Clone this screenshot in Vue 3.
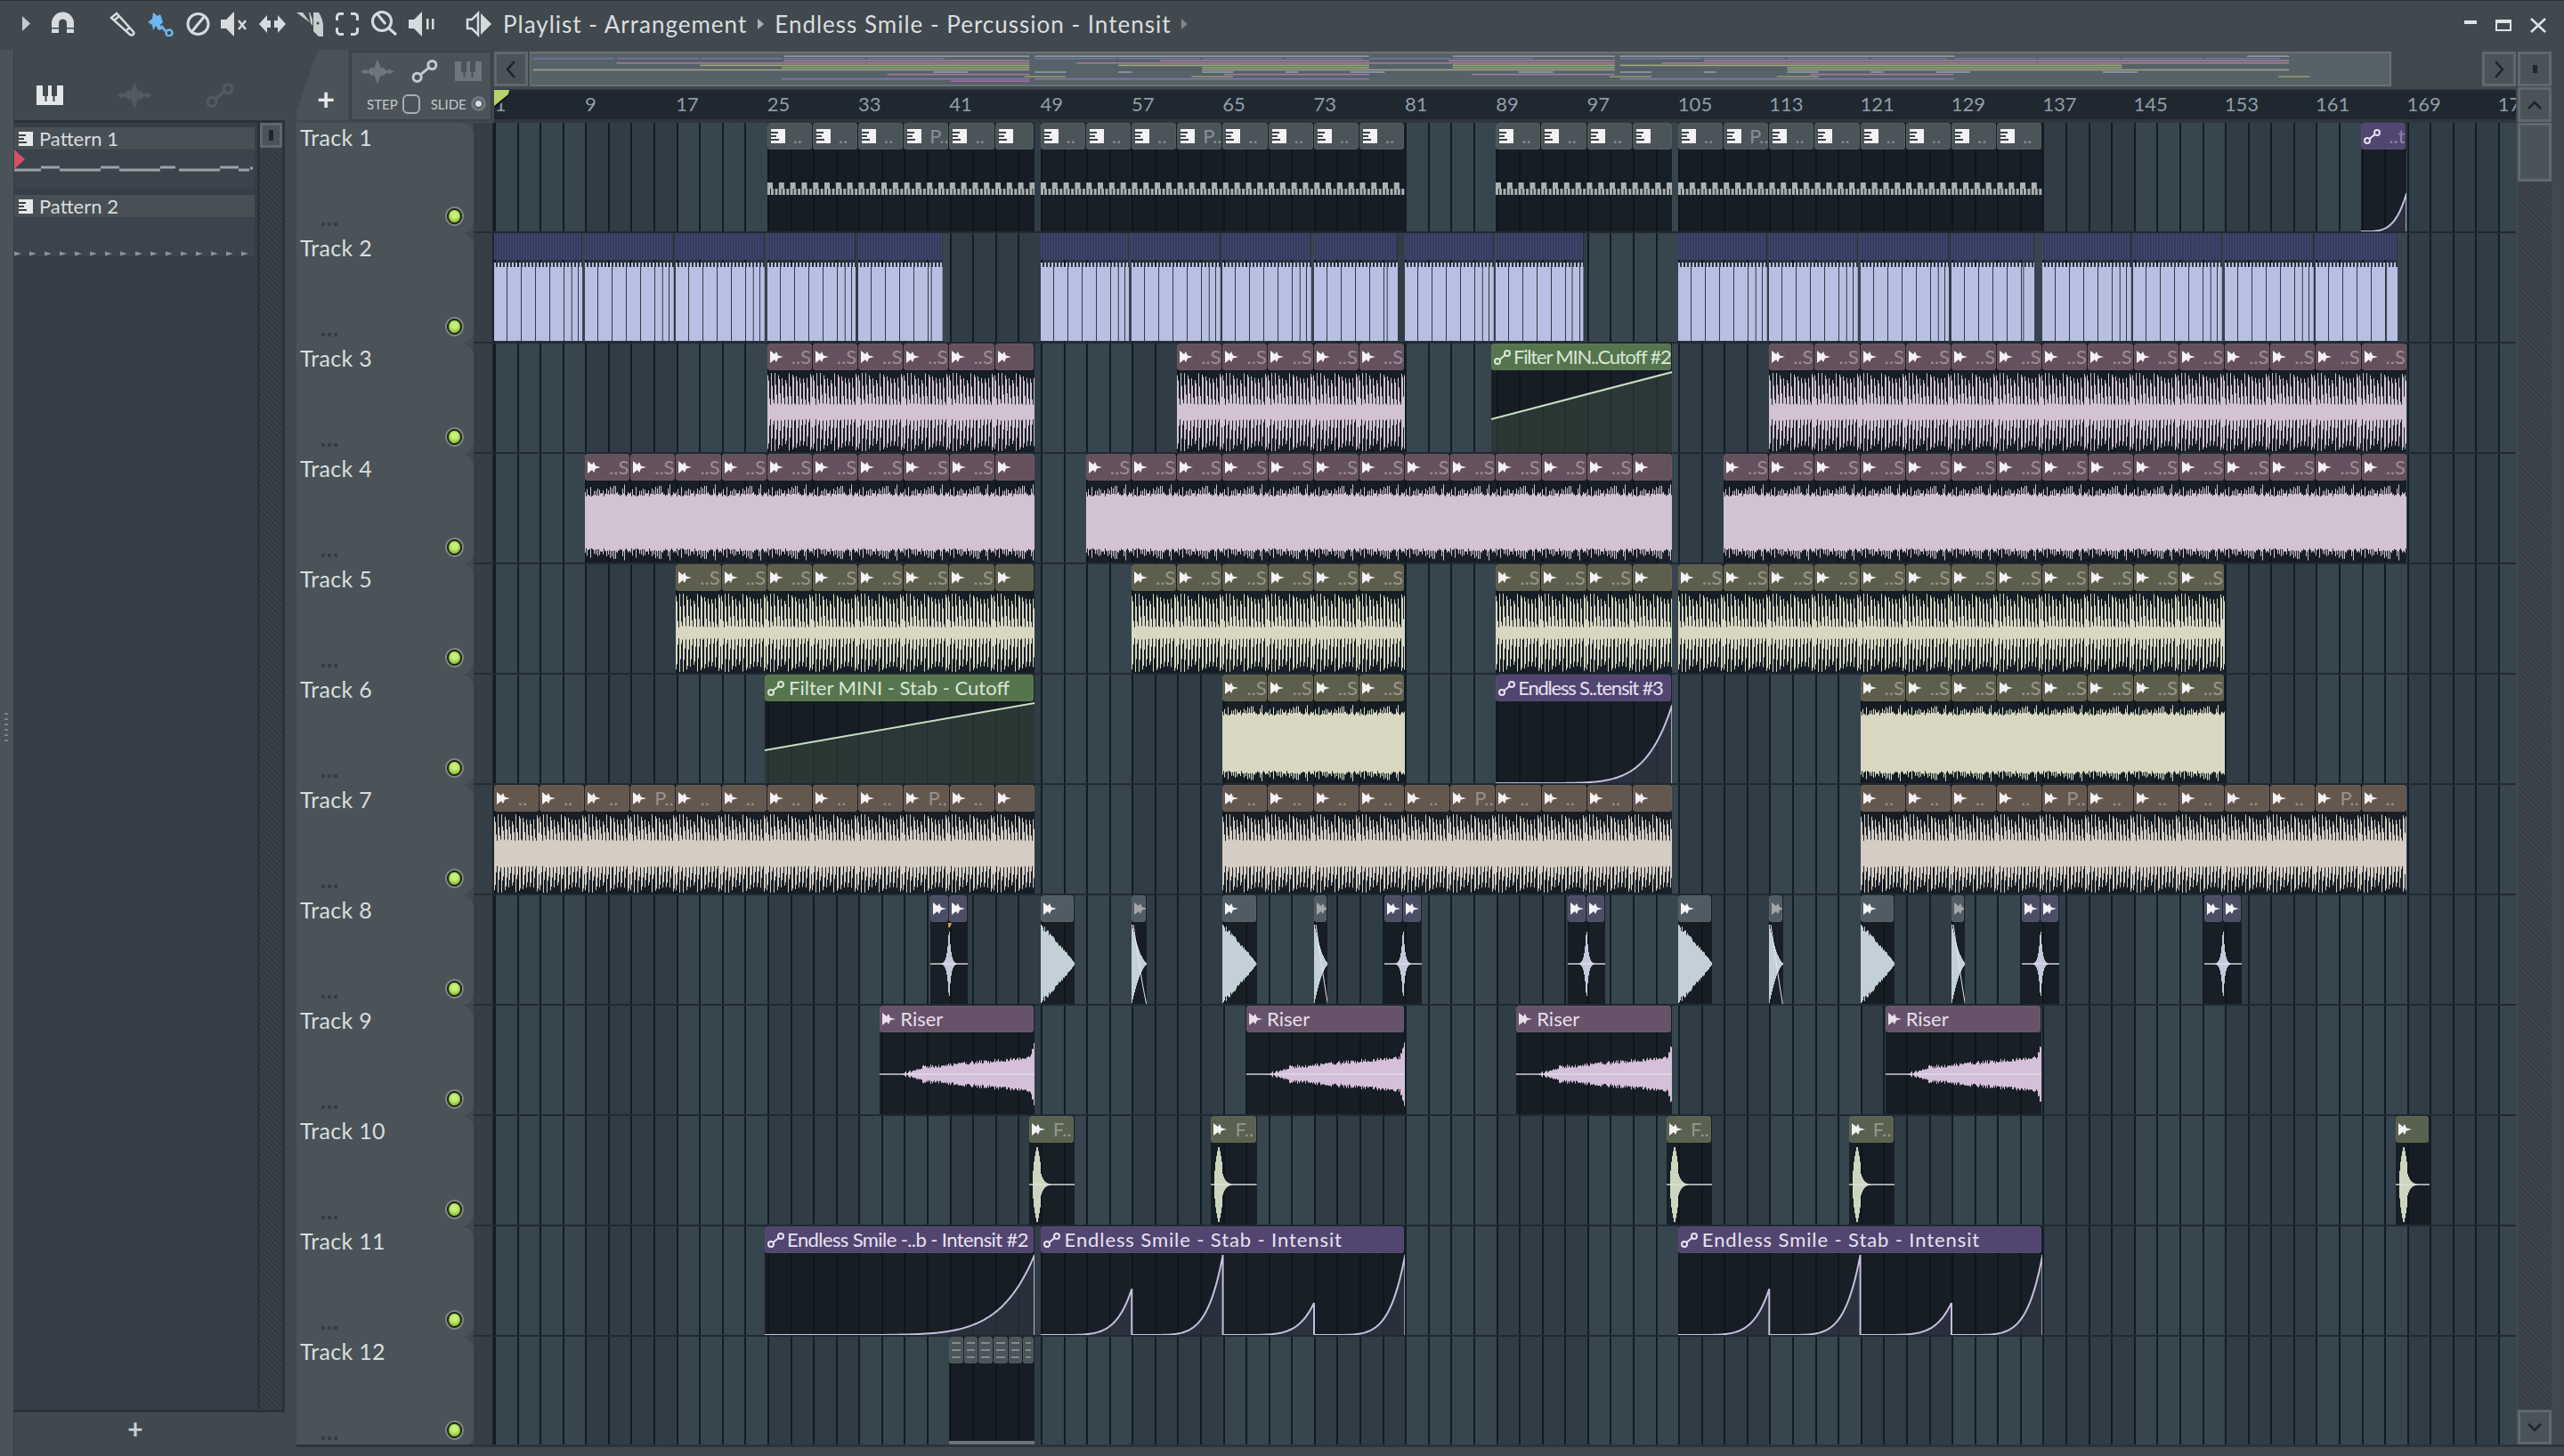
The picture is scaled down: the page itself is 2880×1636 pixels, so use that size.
<template>
  <div class="fl-window">
    <svg class="defs" width="0" height="0">
      <symbol id="ic-pat" viewBox="0 0 16 16">
        <path fill="currentColor" d="M0 0h16v16H0z" />
        <path fill="#3c4348" d="M0 3h8v2H0zM0 7h6v2H0zM0 11h9v2H0z" />
      </symbol>
      <symbol id="ic-wave" viewBox="0 0 15 14">
        <path fill="currentColor" d="M0 0l5 4 2-3 2 4.500 6 1.500-6 1.500-2 4.500-2-3-5 4z" />
      </symbol>
      <symbol id="ic-auto" viewBox="0 0 19 17">
        <g fill="none" stroke="currentColor" stroke-width="2">
          <circle cx="4" cy="13" r="3" />
          <circle cx="15" cy="4" r="3" />
          <path d="M6.500 11l6-5" />
        </g>
      </symbol>
      <symbol id="ic-piano" viewBox="0 0 30 22">
        <path fill="currentColor" fill-rule="evenodd" d="M0 0h30v22H0zM7 0v12h2.500v6h2V12H13V0zM17 0v12h1.500v6h2V12H23V0z" />
      </symbol>
      <symbol id="ic-spike" viewBox="0 0 40 30">
        <path fill="currentColor" d="M0 15l6-3 3 2 4-4 3 1 4-11 4 11 3-1 4 4 3-2 6 3-6 3-3-2-4 4-3-1-4 11-4-11-3 1-4-4-3 2z" />
      </symbol>
    </svg>

    <header class="titlebar">
      <svg class="play-btn" width="10" height="17" viewBox="0 0 10 17"><path d="M0 0l9 8.500L0 17z" /></svg>
      <svg class="magnet" width="27" height="27" viewBox="0 0 27 27">
        <path d="M1 24V13a12.500 12.500 0 0 1 25 0v11h-8V13a4.500 4.500 0 0 0-9 0v11z" />
        <path class="cut" d="M1 18h8v1.500H1zM18 18h8v1.500h-8z" />
      </svg>
      <div class="tools">
        <div class="tool">
          <svg width="30" height="28" viewBox="0 0 30 28" class="line">
            <path d="M2 7l6-5 19 21c1 3-1 4-4 3z" />
            <path d="M5 10l6-5M19 21l4-3" />
          </svg>
        </div>
        <div class="tool">
          <svg width="30" height="28" viewBox="0 0 30 28" class="blue">
            <path d="M1 12l5-4 1-7 5 4 3-2 3 9-3 3 2 5-4 1-3-5-3 5-1-6z" />
            <path d="M17 15l5 6-2 2-5-6z" />
            <circle cx="25" cy="24" r="3.500" fill="none" stroke="#6db7ee" stroke-width="2.500" />
          </svg>
        </div>
        <div class="tool">
          <svg width="27" height="26" viewBox="0 0 27 26" class="line thick">
            <circle cx="13.500" cy="13" r="11.500" />
            <path d="M7 21L20 5" />
          </svg>
        </div>
        <div class="tool">
          <svg width="32" height="30" viewBox="0 0 32 30">
            <path d="M0 10h6l9-9v28l-9-9H0z" />
            <path class="line-x" d="M20 11l8 10M28 11l-8 10" />
          </svg>
        </div>
        <div class="tool">
          <svg width="30" height="20" viewBox="0 0 30 20">
            <path d="M0 10L9 0v6h4v8H9v6zM30 10L21 0v6h-4v8h4v6z" />
            <path class="cut" d="M14 3h2v14h-2z" />
          </svg>
        </div>
        <div class="tool">
          <svg width="30" height="28" viewBox="0 0 30 28">
            <path d="M0 1h14l2 12zM19 1h6c3 5 5 10 5 15v12h-5l-6-6zM7 1l11 15V9L15 1z" opacity=".9" />
            <circle class="cut" cx="24" cy="13" r="1.500" />
          </svg>
        </div>
        <div class="tool">
          <svg width="26" height="26" viewBox="0 0 26 26" class="line thick">
            <path d="M1.500 9V5a3.500 3.500 0 0 1 3.500-3.500h4M17 1.500h4A3.500 3.500 0 0 1 24.500 5v4M24.500 17v4a3.500 3.500 0 0 1-3.500 3.500h-4M9 24.500H5A3.500 3.500 0 0 1 1.500 21v-4" />
          </svg>
        </div>
        <div class="tool">
          <svg width="30" height="29" viewBox="0 0 30 29" class="line thick">
            <circle cx="12" cy="12" r="10.500" />
            <path d="M7 4l9 11M20 20l8 7" stroke-width="3" />
          </svg>
        </div>
        <div class="tool">
          <svg width="30" height="30" viewBox="0 0 30 30">
            <path d="M0 10h6l9-9v28l-9-9H0z" />
            <path d="M20 9h2.500v12H20zM26 9h2.500v12H26z" />
          </svg>
        </div>
      </div>
      <svg class="lr-speaker" width="30" height="30" viewBox="0 0 30 30">
        <path class="hollow" d="M14 3v24l-7-7H2V10h5z" />
        <path d="M17 3l12 12-12 12z" />
      </svg>
      <span class="title-main">Playlist - Arrangement</span>
      <span class="title-sep"></span>
      <span class="title-main">Endless Smile - Percussion - Intensit</span>
      <span class="title-sep dim"></span>
      <div class="window-btns">
        <span class="win-min"></span>
        <span class="win-max"></span>
        <svg width="18" height="17" viewBox="0 0 18 17"><path d="M1 1l16 15M17 1L1 16" /></svg>
      </div>
    </header>

    <div class="workspace">
      <div class="edge-strip"><span class="grip"></span></div>

      <aside class="picker">
        <div class="picker-tools">
          <svg class="pick-ic on" width="30" height="22"><use href="#ic-piano" /></svg>
          <svg class="pick-ic off" width="40" height="30"><use href="#ic-spike" /></svg>
          <svg class="pick-ic off" width="32" height="28" viewBox="0 0 19 17"><use href="#ic-auto" width="19" height="17" /></svg>
        </div>
        <div class="picker-list">
          <div class="pattern-col">
            <div v-for="p in PATTERNS" :key="p.name" class="pattern">
              <div class="pattern-head">
                <svg class="pattern-ic" width="16" height="16"><use href="#ic-pat" /></svg>
                <span>{{ p.name }}</span>
              </div>
              <div class="pattern-body">
                <svg width="270" height="43">
                  <path v-if="p.notes" class="pat-notes" :d="p.notes" />
                  <path v-else class="pat-marks" :d="patternMarks" />
                </svg>
              </div>
            </div>
            <span class="pattern-marker"></span>
          </div>
          <div class="hatch-scroll">
            <div class="hbtn"><span class="hbtn-dot tall"></span></div>
          </div>
        </div>
        <div class="picker-add">+</div>
      </aside>

      <main class="playlist">
        <div class="playlist-top">
          <div class="tool-block">
            <div class="add-tab">+</div>
            <div class="clip-tools">
              <div class="clip-tools-icons">
                <svg class="off" width="38" height="29"><use href="#ic-spike" width="38" height="29" /></svg>
                <svg class="mid" width="32" height="26" viewBox="0 0 19 17"><use href="#ic-auto" width="19" height="17" /></svg>
                <svg class="off" width="30" height="22"><use href="#ic-piano" /></svg>
              </div>
              <div class="step-row">
                <span>STEP</span><i class="step-box"></i>
                <span class="slide">SLIDE</span><i class="slide-dot"></i>
              </div>
            </div>
          </div>

          <div class="timeline">
            <div class="overview">
              <div class="hbtn big">
                <svg width="12" height="20" viewBox="0 0 12 20"><path d="M10 1L2 10l8 9" /></svg>
              </div>
              <div class="map">
                <svg width="2091" height="37">
                  <rect
                    v-for="m in miniClips"
                    :key="m.key"
                    :class="'mini-' + m.row"
                    :x="m.x"
                    :y="m.y"
                    :width="m.w"
                    height="1.600"
                  />
                </svg>
              </div>
              <div class="overview-gap"></div>
              <div class="hbtn big">
                <svg width="12" height="20" viewBox="0 0 12 20"><path d="M2 1l8 9-8 9" /></svg>
              </div>
            </div>
            <div class="ruler">
              <span v-for="r in rulerMarks" :key="r.bar" class="ruler-num" :style="{ left: r.left + 'px' }">{{ r.bar }}</span>
              <svg class="play-mark" width="20" height="20" viewBox="0 0 20 20">
                <path class="mark-shadow" d="M0 18L17 1l1 5L2 20z" />
                <path class="mark-fill" d="M0 0h17l-1 5L0 18z" />
              </svg>
            </div>
          </div>

          <div class="vscroll-top">
            <div class="hbtn big"><span class="hbtn-dot"></span></div>
            <div class="hbtn big">
              <svg width="16" height="10" viewBox="0 0 16 10"><path d="M1 9l7-7 7 7" /></svg>
            </div>
          </div>
        </div>

        <div class="playlist-body">
          <div class="tracks">
            <div v-for="t in tracks" :key="t.name" class="track">
              <div class="track-head">
                <span class="track-name">{{ t.name }}</span>
                <span class="track-dots"><i></i><i></i><i></i></span>
                <span class="track-led"></span>
              </div>
              <div class="track-gap"></div>
              <div class="lane">
                <div
                  v-for="c in t.clips"
                  :key="c.key"
                  class="clip"
                  :class="[c.tone, c.kind]"
                  :style="{ left: c.left + 'px', width: c.width + 'px' }"
                >
                  <div class="tabs">
                    <div
                      v-for="tab in c.tabs"
                      :key="tab.key"
                      class="tab"
                      :style="{ width: tab.width + 'px' }"
                    >
                      <svg v-if="c.icon" class="tab-ic" :class="'tab-ic-' + c.icon" :width="c.icon === 'auto' ? 19 : 15" :height="c.icon === 'auto' ? 17 : 14">
                        <use :href="'#ic-' + c.icon" />
                      </svg>
                      <span v-if="tab.text" class="tab-text" :class="[c.fit, { dim: tab.dim }]">{{ tab.text }}</span>
                    </div>
                  </div>
                  <svg class="clip-art" :width="c.width" height="94">
                    <path v-for="(a, i) in c.art" :key="i" :class="a.cls" :d="a.d" />
                  </svg>
                </div>
              </div>
            </div>
          </div>
          <div class="vscroll">
            <div class="thumb"></div>
            <div class="hatch"></div>
            <div class="hbtn big">
              <svg width="16" height="10" viewBox="0 0 16 10"><path d="M1 1l7 7 7-7" /></svg>
            </div>
          </div>
        </div>
        <div class="playlist-foot"></div>
      </main>
    </div>
  </div>
</template>

<script setup>
const LANE_LEFT = 555
const BAR = 12.79
const barX = (b) => 555.7 + (b - 1) * BAR

// pseudo random, repeats per tab so waveforms look looped like the real thing
function hash(n) {
  const s = Math.sin(n * 127.1 + 11.7) * 43758.5453
  return s - Math.floor(s)
}

const MID = 47

function stabWave(w, band, max, pitch) {
  let d = ''
  for (let x = 0; x < w; x++) {
    const m = x % 51
    const r = hash(m)
    const step = m % pitch
    let amp = band + r * 2
    if (step === 0) amp = (0.8 + 0.2 * r) * max
    else if (step === 1) amp = (0.6 + 0.3 * r) * max
    else if (step === 2) amp = band + r * (max * 0.3)
    d += `M${x + 0.5} ${(MID - amp).toFixed(1)}V${(MID + amp).toFixed(1)}`
  }
  return [{ cls: 'w-stroke', d }]
}

function denseWave(w, base, max) {
  let d = ''
  for (let x = 0; x < w; x++) {
    const m = x % 51
    const r = hash(m + 60)
    const amp = m % 2 === 0 ? base + r * (max - base) : base + r * 4
    d += `M${x + 0.5} ${(MID - amp).toFixed(1)}V${(MID + amp).toFixed(1)}`
  }
  return [{ cls: 'w-stroke', d }]
}

function shapeWave(w, ampAt, withLine) {
  let d = ''
  for (let x = 0; x < w; x++) {
    const amp = Math.max(ampAt(x), 0.4)
    d += `M${x + 0.5} ${(MID - amp).toFixed(1)}V${(MID + amp).toFixed(1)}`
  }
  const art = [{ cls: 'w-stroke', d }]
  if (withLine) art.push({ cls: 'w-hair', d: `M0 ${MID}H${w}` })
  return art
}

const spikeWave = (w) =>
  shapeWave(w, (x) => 44 * Math.exp(-Math.abs(x + 0.5 - w / 2) / 2), true)

// only the first hit carries the little orange fade handle
const spikeWaveMarked = (w) => {
  const art = spikeWave(w)
  art.push({ cls: 'w-tick', d: `M${w / 2 - 1} 1h4l-2 5h-2z` })
  return art
}

const triWave = (w) =>
  shapeWave(w, (x) => 44 * Math.pow(1 - x / w, 0.9) * (0.9 + 0.16 * hash(x)) - 0.4, false)

const slimWave = (w) => {
  const art = shapeWave(w, (x) => 44 * Math.pow(1 - x / w, 1.6) + (x > w - 6 ? 1 : 0), false)
  art.push({ cls: 'w-hair', d: `M2 3C6 30 10 60 ${w} 92` })
  return art
}

const kickWave = (w) =>
  shapeWave(w, (x) => {
    if (x < 4) return 0
    if (x < 13) return 44 * Math.pow(Math.max(0, 1 - Math.abs(x - 8.5) / 5), 0.45)
    return 12 * Math.exp(-(x - 13) / 3.5)
  }, true)

function riserWave(w) {
  const art = shapeWave(w, (x) => {
    if (x < 26) return 0
    const t = (x - 26) / (w - 26)
    const jag = (hash(x) - 0.5) * 4.5
    const ramp = Math.min(1, t * 7) * 6 + 13 * t + jag
    const tip = x > w - 6 ? (x - w + 6) * 2.8 : 0
    return ramp + tip
  }, true)
  return art
}

function noteGrid(w) {
  let d = ''
  for (let x = 0; x < w; x += 12.8) {
    d += `M${x} 37h6v7h-6z`
    d += `M${x} 44h3v7h-3zM${(x + 4).toFixed(1)} 44h3v7h-3zM${(x + 8.5).toFixed(1)} 44h3v7h-3z`
  }
  return [{ cls: 'w-notes', d }]
}

function blueBody(w) {
  let solid = `M0 8H${w}V91H0z`
  for (let x = 0; x < w; x += 4) solid += `M${x} 3h2v6h-2z`
  let lines = ''
  for (let x = 14.5; x < w - 2; x += 16) lines += `M${x} 3V91`
  lines += `M${w - 12.5} 3V91`
  return [
    { cls: 'w-blue', d: solid },
    { cls: 'w-blue-lines', d: lines },
  ]
}

// exponential automation ramps, base line sits at the bottom of the clip
function curveArt(w, ramps) {
  const BASE = 92
  let line = ''
  let fill = ''
  for (const r of ramps) {
    const x0 = (r.from) * BAR
    const x1 = (r.to) * BAR
    let seg = ''
    for (let x = x0; x <= x1; x += 2) {
      const t = (x - x0) / (x1 - x0)
      const y = BASE - r.peak * Math.pow(t, r.exp || 7)
      seg += `${seg ? 'L' : 'M'}${x.toFixed(1)} ${y.toFixed(1)}`
    }
    const top = BASE - r.peak
    seg += `L${x1.toFixed(1)} ${top}`
    line += seg + `M${x1.toFixed(1)} ${top}V${BASE}`
    fill += seg + `L${x1.toFixed(1)} 94L${x0.toFixed(1)} 94z`
  }
  return [
    { cls: 'w-area', d: fill },
    { cls: 'w-curve', d: line },
  ]
}

function lineArt(w) {
  return [
    { cls: 'w-area', d: `M0 55L${w} 2V94H0z` },
    { cls: 'w-curve', d: `M0 55L${w} 2` },
  ]
}

function makeTabs(from, to, step, text, pAt) {
  const tabs = []
  let b = from
  let i = 0
  while (b < to - 0.01) {
    const end = Math.min(b + step, to)
    const width = Math.round((end - b) * BAR * 10) / 10 - 1
    const isP = pAt && pAt.includes(b)
    tabs.push({
      key: i++,
      width,
      text: width > 46 ? (isP ? 'P..' : text) : '',
      dim: true,
    })
    b = end
  }
  return tabs
}

function clip(from, to, opts) {
  const width = (to - from) * BAR
  const tabs = opts.step
    ? makeTabs(from, to, opts.step, opts.text, opts.pAt)
    : [{ key: 0, width: width - 1, text: opts.text, dim: opts.dim }]
  return {
    key: from + '-' + to,
    from,
    to,
    left: barX(from) - 1 - LANE_LEFT,
    width,
    tabs,
    tone: opts.tone,
    kind: opts.kind || '',
    fit: opts.fit || '',
    icon: opts.icon === undefined ? 'wave' : opts.icon,
    art: opts.art ? opts.art(width) : [],
  }
}

const pat = (a, b, pAt) =>
  clip(a, b, { tone: 'tone-grey', icon: 'pat', step: 4, text: '..', pAt, art: noteGrid })

function blues(a, b) {
  const out = []
  for (let s = a; s < b; s += 8) {
    const e = Math.min(s + 8, b)
    out.push(
      clip(s, e - 0.2, {
        tone: 'tone-blue',
        kind: 'flat',
        icon: null,
        art: blueBody,
      })
    )
  }
  return out
}

const stab = (a, b, tone, text, band, pAt) =>
  clip(a, b, { tone, step: 4, text, pAt, art: (w) => stabWave(w, band, 44, 4) })

const dense = (a, b, tone, base) =>
  clip(a, b, { tone, step: 4, text: '..S', art: (w) => denseWave(w, base, 44) })

const filterClip = (a, b, text, fit) =>
  clip(a, b, { tone: 'tone-green', icon: 'auto', text, fit, art: lineArt })

const curve = (a, b, text, ramps, dim, fit) =>
  clip(a, b, {
    tone: 'tone-purple',
    icon: 'auto',
    text,
    dim,
    fit,
    art: (w) => curveArt(w, ramps),
  })

const spike = (a, b, art = spikeWave) => clip(a, b, { tone: 'tone-indigo', step: (b - a) / 2, art })
const tri = (a, b) => clip(a, b, { tone: 'tone-slate', art: triWave })
const slim = (a, b) => clip(a, b, { tone: 'tone-slate', kind: 'faint', art: slimWave })
const riser = (a, b) => clip(a, b, { tone: 'tone-riser', text: 'Riser', art: riserWave })
const kick = (a, b, text = 'F..') =>
  clip(a, b, { tone: 'tone-moss', text, dim: true, art: kickWave })

const STAB_RAMPS = [
  { from: 0, to: 8, peak: 52, exp: 6 },
  { from: 8, to: 16, peak: 90, exp: 6 },
  { from: 16, to: 24, peak: 36, exp: 6 },
  { from: 24, to: 32, peak: 90, exp: 6 },
]

const tracks = [
  [
    pat(25, 48.5, [37]),
    pat(49, 81, [61]),
    pat(89, 104.5),
    pat(105, 137, [109]),
    curve(165, 169, '..t', [{ from: 0, to: 4, peak: 43, exp: 4 }], true),
  ],
  [...blues(1, 40.6), ...blues(49, 65), ...blues(65, 80.6), ...blues(81, 96.9), ...blues(105, 121), ...blues(121, 136.5), ...blues(137, 168.4)],
  [
    stab(25, 48.5, 'tone-pink', '..S', 8),
    stab(61, 81, 'tone-pink', '..S', 8),
    filterClip(88.6, 104.5, 'Filter MIN..Cutoff #2', 'fit-tight'),
    stab(113, 169, 'tone-pink', '..S', 8),
  ],
  [dense(9, 48.5, 'tone-pink', 29), dense(53, 104.5, 'tone-pink', 29), dense(109, 169, 'tone-pink', 29)],
  [
    stab(17, 48.5, 'tone-olive', '..S', 6),
    stab(57, 81, 'tone-olive', '..S', 6),
    stab(89, 104.5, 'tone-olive', '..S', 6),
    stab(105, 153, 'tone-olive', '..S', 6),
  ],
  [
    filterClip(24.8, 48.5, 'Filter MINI - Stab - Cutoff'),
    dense(65, 81, 'tone-olive', 31),
    curve(89, 104.5, 'Endless S..tensit #3', [{ from: 0, to: 15.5, peak: 88, exp: 7 }], false, 'fit-tight'),
    dense(121, 153, 'tone-olive', 31),
  ],
  [
    stab(1, 48.5, 'tone-brown', '..', 14, [13, 37]),
    stab(65, 104.5, 'tone-brown', '..', 14, [85]),
    stab(121, 169, 'tone-brown', '..', 14, [137, 161]),
  ],
  [
    spike(39.3, 42.6, spikeWaveMarked),
    tri(49, 52),
    slim(57, 58.3),
    tri(65, 68),
    slim(73, 74.2),
    spike(79.2, 82.5),
    spike(95.3, 98.6),
    tri(105, 108),
    slim(113, 114.2),
    tri(121, 124),
    slim(129, 130.2),
    spike(135.2, 138.5),
    spike(151.2, 154.5),
  ],
  [riser(34.9, 48.5), riser(67.1, 81), riser(90.8, 104.5), riser(123.2, 136.9)],
  [kick(48, 52), kick(64, 68), kick(104, 108), kick(120, 124), kick(168, 171, '')],
  [
    curve(24.8, 48.5, 'Endless Smile -..b - Intensit #2', [{ from: 0, to: 23.7, peak: 90, exp: 8 }], false, 'fit-snug'),
    curve(49, 81, 'Endless Smile - Stab - Intensit', STAB_RAMPS, false, 'fit-wide'),
    curve(105, 137, 'Endless Smile - Stab - Intensit', STAB_RAMPS, false, 'fit-wide'),
  ],
  [clip(41, 48.5, { tone: 'tone-grey', kind: 'tiny', icon: null, step: 1.3, text: '', art: (w) => [{ cls: 'w-foot', d: `M0 87h${w}v4H0z` }] })],
].map((clips, i) => ({ name: `Track ${i + 1}`, clips }))

const rulerMarks = []
for (let b = 1; b < 180; b += 8) rulerMarks.push({ bar: b, left: barX(b) - LANE_LEFT - (b === 1 ? 0 : 1) })

const miniClips = tracks.flatMap((t, row) =>
  t.clips.map((c) => ({
    key: row + '-' + c.key,
    row,
    x: 2.7 + (c.from - 1) * 11.74,
    y: 2.4 + row * 2.55,
    w: (c.to - c.from) * 11.74,
  }))
)

const PATTERNS = [
  {
    name: 'Pattern 1',
    notes: 'M0 20.500h30v3H0zM30 17.500h21v3H30zM51 20.500h46v3H51zM97 17.500h21v3H97zM118 20.500h46v3h-46zM164 17.500h17v3h-17zM185 20.500h46v3h-46zM231 17.500h21v3h-21zM252 20.500h12v3h-12zM265 18.500h3v3h-3z',
  },
  { name: 'Pattern 2', notes: '' },
]

let patternMarks = ''
for (let x = 0; x < 260; x += 17) patternMarks += `M${x} 37.500l8 2.500-8 2.500z`
</script>

<style scoped>
.fl-window {
  width: 2880px;
  height: 1636px;
  display: flex;
  flex-direction: column;
  background: #41494e;
  font-family: Lato, "Open Sans", sans-serif;
  color: #d9dedf;
  overflow: hidden;
  border-top: 1px solid #2d3539;
  box-sizing: border-box;
}

.defs {
  position: absolute;
}

/* title bar */
.titlebar {
  height: 55px;
  flex-shrink: 0;
  display: flex;
  align-items: center;
  padding-bottom: 4px;
  box-sizing: border-box;
  fill: #d7dbdd;
}

.play-btn {
  margin-left: 25px;
  fill: #c4c9cc;
}

.magnet {
  margin-left: 22px;
}

.cut {
  fill: #41494e;
}

.tools {
  display: flex;
  margin-left: 33px;
}

.tool {
  width: 42px;
  display: flex;
  justify-content: center;
  align-items: center;
}

.line,
.line path,
.line circle {
  fill: none;
  stroke: #d7dbdd;
  stroke-width: 2.5;
}

.thick,
.thick path,
.thick circle {
  stroke-width: 3;
}

.blue {
  fill: #6db7ee;
}

.line-x {
  fill: none;
  stroke: #d7dbdd;
  stroke-width: 2.5;
}

.lr-speaker {
  margin-left: 28px;
}

.hollow {
  fill: none;
  stroke: #d7dbdd;
  stroke-width: 2.5;
}

.title-main {
  font-size: 26px;
  letter-spacing: 1px;
  margin-left: 12px;
  white-space: nowrap;
}

.title-main + .title-sep {
  margin-left: 12px;
}

.title-sep {
  width: 0;
  height: 0;
  margin-right: 0;
  border-left: 7px solid #aab1b4;
  border-top: 6px solid transparent;
  border-bottom: 6px solid transparent;
}

.title-sep.dim {
  border-left-color: #7c868a;
}

.window-btns {
  margin-left: auto;
  margin-right: 20px;
  margin-top: 4px;
  display: flex;
  align-items: center;
  gap: 21px;
}

.win-min {
  width: 14px;
  height: 4px;
  margin-bottom: 8px;
  background: #dfe3e5;
}

.win-max {
  width: 18px;
  height: 13px;
  box-sizing: border-box;
  border: 2px solid #dfe3e5;
  border-top-width: 4px;
}

.window-btns svg {
  fill: none;
  stroke: #dfe3e5;
  stroke-width: 2.5;
}

/* layout */
.workspace {
  flex: 1;
  display: flex;
  min-height: 0;
}

.edge-strip {
  width: 15px;
  flex-shrink: 0;
  background: #4a5358;
  border-right: 1px solid #373f44;
  position: relative;
}

.grip {
  position: absolute;
  left: 5px;
  top: 745px;
  width: 4px;
  height: 34px;
  background: repeating-linear-gradient(180deg, #7a8388 0 2px, transparent 2px 6px);
}

/* picker */
.picker {
  width: 304px;
  flex-shrink: 0;
  display: flex;
  flex-direction: column;
}

.picker-tools {
  height: 79px;
  flex-shrink: 0;
  display: flex;
  align-items: center;
  padding-top: 22px;
  box-sizing: border-box;
  padding-left: 25px;
  gap: 60px;
}

.pick-ic.on {
  color: #e4e7e8;
}

.pick-ic.off {
  color: #525b60;
}

.picker-list {
  flex: 1;
  display: flex;
  min-height: 0;
  background: #353d46;
  border-top: 3px solid #2b3238;
  border-bottom: 3px solid #2b3238;
  border-right: 3px solid #2b3238;
}

.pattern-col {
  width: 273px;
  position: relative;
  padding-top: 5px;
}

.pattern {
  height: 76px;
  width: 270px;
  display: flex;
  flex-direction: column;
}

.pattern-head {
  height: 25px;
  flex-shrink: 0;
  display: flex;
  align-items: center;
  gap: 7px;
  background: #484f55;
  padding-left: 5px;
  border-bottom: 1px solid #3a4248;
  font-size: 22px;
  color: #d8dcde;
}

.pattern-ic {
  color: #e6e9ea;
}

.pattern-body {
  height: 43px;
  background: #3b434c;
}

.pat-notes {
  fill: #9ca2a6;
}

.pat-marks {
  fill: #8c9296;
}

.pattern-marker {
  position: absolute;
  left: 0;
  top: 30px;
  border-left: 12px solid #d6506a;
  border-top: 11px solid transparent;
  border-bottom: 11px solid transparent;
}

.hatch-scroll {
  flex: 1;
  background: repeating-linear-gradient(45deg, #3b4247 0 2px, #33393e 2px 4px);
  border-left: 3px solid #2b3238;
}

.hbtn {
  height: 28px;
  background: #4a5358;
  border: 3px solid #5f686b;
  box-sizing: border-box;
  display: flex;
  align-items: center;
  justify-content: center;
}

.hbtn svg {
  fill: none;
  stroke: #1d2429;
  stroke-width: 2.5;
}

.hbtn.big {
  width: 38px;
  height: 39px;
  flex-shrink: 0;
}

.hbtn-dot {
  width: 5px;
  height: 9px;
  background: #20272c;
}

.hbtn-dot.tall {
  height: 12px;
}

.picker-add {
  height: 49px;
  flex-shrink: 0;
  display: flex;
  align-items: center;
  justify-content: center;
  padding-right: 32px;
  padding-bottom: 14px;
  box-sizing: border-box;
  font-size: 30px;
  font-weight: 700;
  color: #c8cdcf;
}

/* playlist */
.playlist {
  flex: 1;
  margin-left: 13px;
  display: flex;
  flex-direction: column;
  min-width: 0;
}

.playlist-top {
  height: 82px;
  flex-shrink: 0;
  display: flex;
}

.tool-block {
  width: 222px;
  flex-shrink: 0;
  display: flex;
  gap: 2px;
  padding-right: 2px;
  box-sizing: border-box;
}

.add-tab {
  width: 58px;
  height: 79px;
  flex-shrink: 0;
  background: #4b5358;
  clip-path: polygon(24px 0, 100% 0, 100% 100%, 0 100%, 0 70px);
  display: flex;
  align-items: flex-end;
  justify-content: center;
  padding-left: 8px;
  padding-bottom: 7px;
  box-sizing: border-box;
  font-size: 34px;
  font-weight: 700;
  line-height: 1;
  color: #e8ebec;
}

.clip-tools {
  flex: 1;
  height: 79px;
  margin-top: 1px;
  background: #4b5358;
  display: flex;
  flex-direction: column;
  box-sizing: border-box;
  border: 2px solid #3a4247;
}

.clip-tools-icons {
  height: 42px;
  display: flex;
  align-items: center;
  justify-content: space-between;
  padding: 0 10px 0 10px;
  color: #6e767b;
}

.clip-tools-icons .off {
  color: #6e767b;
}

.clip-tools-icons .mid {
  color: #c4c9cc;
}

.step-row {
  flex: 1;
  display: flex;
  align-items: center;
  padding-left: 17px;
  padding-bottom: 2px;
  font-size: 15px;
  color: #c3c8cb;
}

.step-box {
  width: 20px;
  height: 22px;
  margin-left: 5px;
  box-sizing: border-box;
  border: 2px solid #a7adb0;
  border-radius: 6px;
}

.slide {
  margin-left: 12px;
}

.slide-dot {
  width: 17px;
  height: 17px;
  margin-left: 5px;
  box-sizing: border-box;
  border-radius: 50%;
  border: 3px solid #6d757a;
  background: #d7dbdd;
  box-shadow: inset 0 0 0 2px #4b5358;
}

.timeline {
  width: 2271px;
  flex-shrink: 0;
  display: flex;
  flex-direction: column;
  padding-top: 2px;
  box-sizing: border-box;
}

.overview {
  height: 39px;
  flex-shrink: 0;
  display: flex;
}

.map {
  margin-left: 2px;
  width: 2091px;
  flex-shrink: 0;
  height: 39px;
  box-sizing: border-box;
  background: #566168;
  border: 2px solid #697376;
  border-left-width: 1px;
  overflow: hidden;
}

.map svg {
  display: block;
}

.overview-gap {
  width: 102px;
  flex-shrink: 0;
}

.ruler {
  margin-top: 3px;
  height: 38px;
  flex-shrink: 0;
  background: #1f2830;
  border-bottom: 4px solid #2d363d;
  box-sizing: border-box;
  position: relative;
  overflow: hidden;
  box-shadow: inset 0 2px 0 #2a333a;
}

.ruler-num {
  position: absolute;
  top: 4px;
  font-size: 22px;
  line-height: 26px;
  color: #909ca8;
}

.play-mark {
  position: absolute;
  left: 0;
  top: 1px;
}

.mark-shadow {
  fill: #11181d;
}

.mark-fill {
  fill: #b6d46a;
}

.vscroll-top {
  margin-left: 2px;
  width: 38px;
  padding-top: 2px;
  display: flex;
  flex-direction: column;
  gap: 1px;
}

.playlist-body {
  height: 1485px;
  flex-shrink: 0;
  display: flex;
}

.tracks {
  width: 2493px;
  flex-shrink: 0;
  height: 100%;
  overflow: hidden;
}

.track {
  height: 124px;
  display: flex;
}

.track-head {
  width: 199px;
  flex-shrink: 0;
  box-sizing: border-box;
  position: relative;
  background: #4b5358;
  border-radius: 0 14px 14px 0;
  padding: 1px 0 0 4px;
  font-size: 25px;
  letter-spacing: 0.3px;
  line-height: 30px;
  color: #d9dedf;
}

.track-name {
  white-space: nowrap;
}

.track-dots {
  position: absolute;
  left: 28px;
  top: 112px;
  display: flex;
  gap: 3px;
}

.track-dots i {
  width: 4px;
  height: 4px;
  background: #363d42;
}

.track-led {
  position: absolute;
  left: 169px;
  top: 96px;
  width: 17px;
  height: 18px;
  box-sizing: border-box;
  border-radius: 50%;
  background: radial-gradient(circle at 50% 40%, #c8ef7a 0 30%, #94c23a 70%);
  border: 2px solid #1f2a12;
  box-shadow: 0 0 0 2px #7e868a;
}

.track-gap {
  width: 23px;
  flex-shrink: 0;
  background: #353e45;
  border-bottom: 2px solid #242d34;
  border-right: 2px solid #1a242b;
  box-sizing: border-box;
}

.lane {
  flex: 1;
  position: relative;
  background:
    repeating-linear-gradient(90deg, #121c24 0 2px, transparent 2px 25.58px),
    repeating-linear-gradient(90deg, #37454f 0 102.32px, #303d47 102.32px 204.64px);
  border-bottom: 2px solid #1f2a32;
  box-sizing: border-box;
  overflow: hidden;
}

/* clips */
.clip {
  position: absolute;
  top: 0;
  height: 122px;
  background: rgba(14, 20, 25, 0.76);
}

.clip.flat {
  background: rgba(14, 20, 25, 0.3);
}

.tabs {
  display: flex;
  height: 30px;
  gap: 1px;
}

.tab {
  height: 30px;
  flex-shrink: 0;
  box-sizing: border-box;
  display: flex;
  align-items: center;
  padding-left: 3px;
  border-radius: 3px;
  overflow: hidden;
  white-space: nowrap;
  font-size: 22px;
  color: #f4f2f4;
  box-shadow: inset 0 0 0 1px rgba(255, 255, 255, 0.04);
}

.tab-ic {
  flex-shrink: 0;
}

.tab-ic-pat {
  width: 16px;
  height: 16px;
  margin-left: 1px;
}

.tab-text {
  margin-left: 5px;
  line-height: 30px;
}

.tab-text.dim {
  margin-left: 9px;
  color: rgba(255, 255, 255, 0.36);
}

.fit-tight {
  letter-spacing: -1.2px;
  margin-left: 3px;
}

.fit-snug {
  letter-spacing: -0.6px;
  margin-left: 3px;
}

.fit-wide {
  letter-spacing: 0.9px;
}

.clip-art {
  position: absolute;
  left: 0;
  top: 30px;
}

.w-stroke {
  fill: none;
  stroke-width: 1;
}

.w-hair {
  fill: none;
  stroke: #e8e8ec;
  stroke-width: 1;
}

.w-tick {
  fill: #e0a050;
}

.w-notes {
  fill: #a9b0ae;
}

.w-foot {
  fill: #6c7478;
}

.w-blue {
  fill: #b9bfe2;
}

.w-blue-lines {
  fill: none;
  stroke: #2e3c47;
  stroke-width: 1;
}

.w-curve {
  fill: none;
  stroke-width: 2;
}

.tone-grey .tab {
  background: #4b5459;
}

.tone-blue .tab {
  background: repeating-linear-gradient(90deg, #414870 0 1px, #363c5e 1px 3px);
  border-radius: 0;
  box-shadow: none;
}

.tone-pink .tab {
  background: #64515d;
}

.tone-pink .w-stroke {
  stroke: #d2c2d2;
}

.tone-olive .tab {
  background: #5e5e4c;
}

.tone-olive .w-stroke {
  stroke: #d8d8c2;
}

.tone-brown .tab {
  background: #64574e;
}

.tone-brown .w-stroke {
  stroke: #d5cdc4;
}

.tone-green .tab {
  background: #56754f;
  color: #d8e6d4;
}

.tone-green .w-curve {
  stroke: #c6e0c2;
}

.tone-green .w-area {
  fill: rgba(126, 160, 126, 0.2);
}

.tone-purple .tab {
  background: #52456f;
  color: #e6e1f4;
}

.tone-purple .w-curve {
  stroke: #c6c0de;
}

.tone-purple .w-area {
  fill: rgba(170, 160, 215, 0.14);
}

.tone-indigo .tab {
  background: #4b4e65;
}

.tone-indigo .w-stroke {
  stroke: #c6c9dc;
}

.tone-slate .tab {
  background: #505c63;
}

.tone-slate .w-stroke {
  stroke: #c3d0d8;
}

.faint .tab-ic {
  opacity: 0.5;
}

.tone-riser .tab {
  background: #66536a;
  color: #e8dfe8;
}

.tone-riser .w-stroke {
  stroke: #d4c0d8;
}

.tone-moss .tab {
  background: #59624f;
}

.tone-moss .w-stroke {
  stroke: #cdd5bf;
}

.tiny .tab {
  background:
    repeating-linear-gradient(180deg, transparent 0 6px, #83898c 6px 8px),
    #4b5459;
  background-clip: content-box, border-box;
  padding: 0 3px;
}

/* right hand scrollbar */
.vscroll {
  margin-left: 2px;
  width: 38px;
  display: flex;
  flex-direction: column;
  flex-shrink: 0;
}

.thumb {
  height: 66px;
  flex-shrink: 0;
  background: #4a5358;
  border: 3px solid #5f686b;
  box-sizing: border-box;
}

.hatch {
  flex: 1;
  background: repeating-linear-gradient(45deg, #3f464b 0 2px, #383f44 2px 4px);
}

.playlist-foot {
  flex: 1;
  border-top: 3px solid #2c343a;
}

/* overview lines, one colour per track */
.mini-0 { fill: #93999b; }
.mini-1 { fill: #6d77a8; }
.mini-2 { fill: #a58196; }
.mini-3 { fill: #a37e92; }
.mini-4 { fill: #a8a67c; }
.mini-5 { fill: #86b06c; }
.mini-6 { fill: #a89c8a; }
.mini-7 { fill: #8c9cb0; }
.mini-8 { fill: #a07ca0; }
.mini-9 { fill: #8e9a6a; }
.mini-10 { fill: #8a76b4; }
.mini-11 { fill: #b06aa8; }
</style>

<style>
html,
body {
  margin: 0;
  background: #41494e;
}
</style>
